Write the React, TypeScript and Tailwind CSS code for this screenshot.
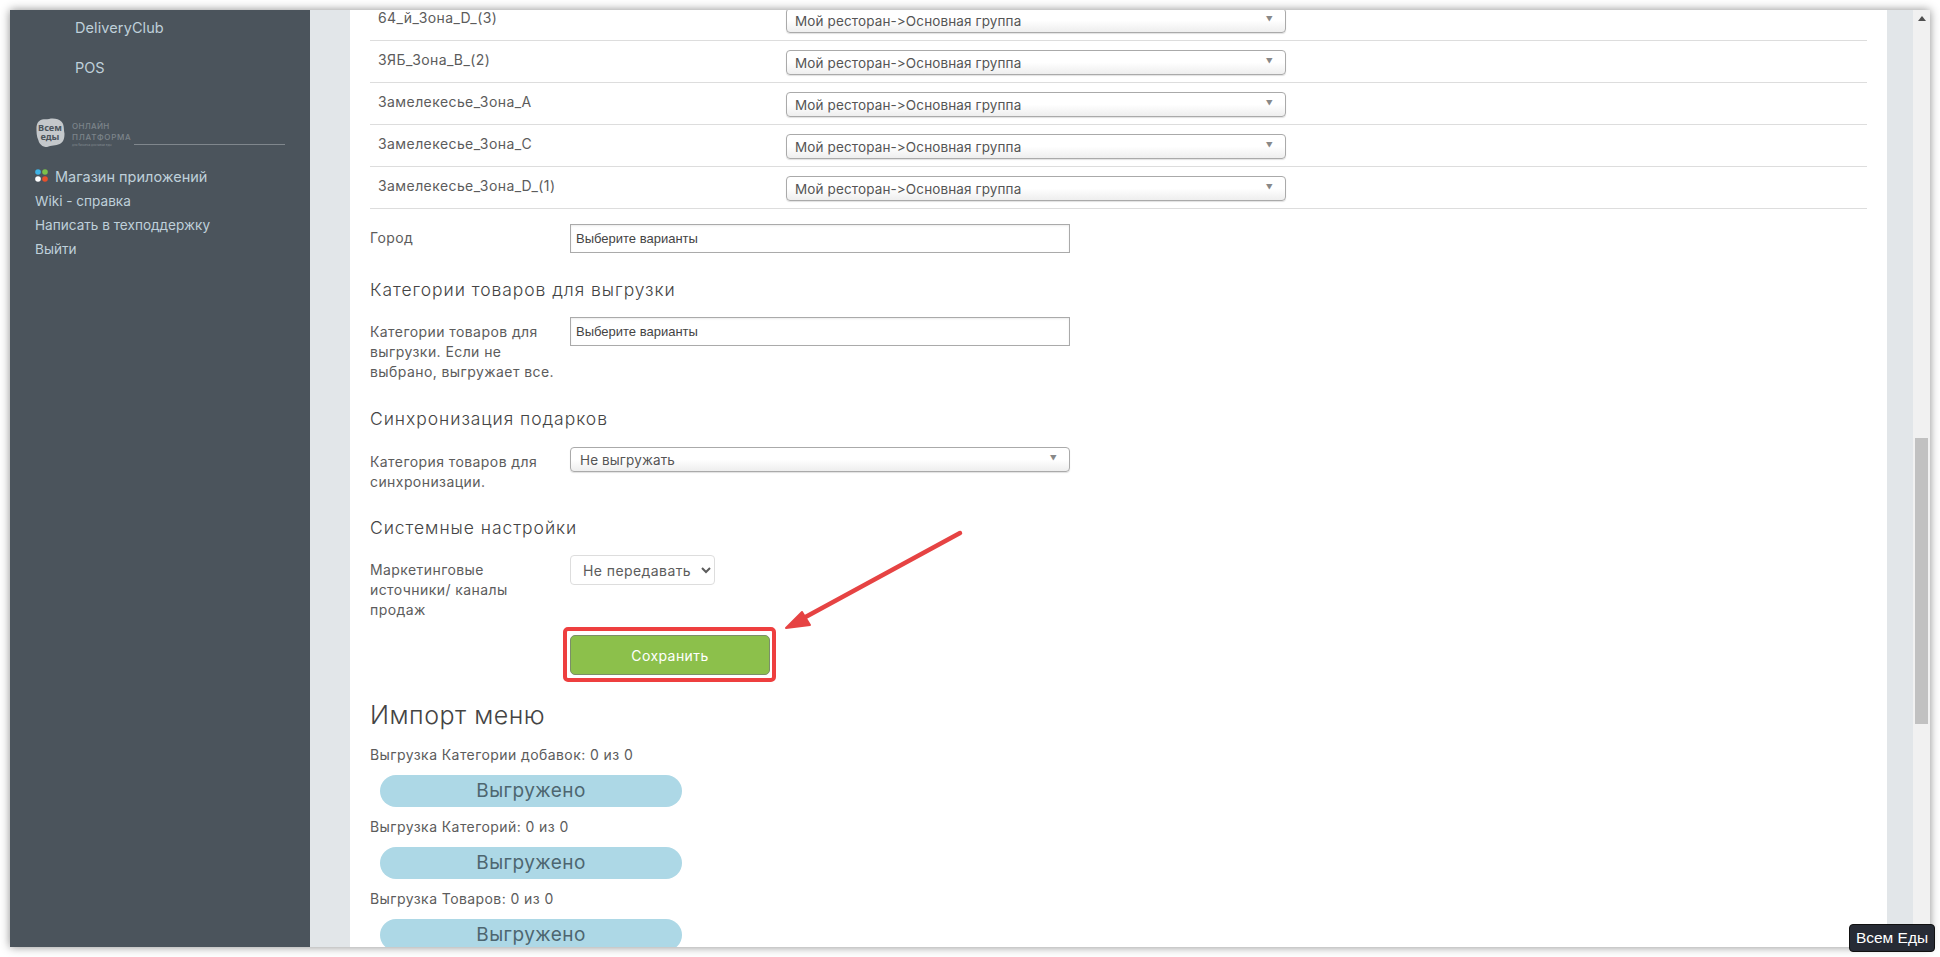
const zones = ["64_й_Зона_D_(3)", "ЗЯБ_Зона_B_(2)", "Замелекесье_Зона_A", "Замелекесье_Зона_C", "Замелекесье_Зона_D_(1)"];
const imports = ["Выгрузка Категории добавок: 0 из 0", "Выгрузка Категорий: 0 из 0", "Выгрузка Товаров: 0 из 0"];
const sideLinks = ["Wiki - справка", "Написать в техподдержку", "Выйти"];

const Logo = () => (
  <div className="flex items-end">
    <svg width="30" height="29" viewBox="0 0 30 30" className="shrink-0">
      <path d="M3 4C7 0 10 2 14 1C19 0 24 1 27 4C30 7 29 12 30 16C30 21 29 25 25 27C21 29 16 28 12 30C7 30 4 27 3 23C1 19 1 14 1 10C1 8 2 5 3 4Z" fill="#c4c8cb" />
      <text x="15" y="13" textAnchor="middle" fontSize="9.5" fontWeight="700" fill="#4b545c" fontFamily="'Noto Sans', sans-serif">Всем</text>
      <text x="15" y="23" textAnchor="middle" fontSize="9.5" fontWeight="700" fill="#4b545c" fontFamily="'Noto Sans', sans-serif">еды</text>
    </svg>
    <div className="ml-[7px] w-[55px] text-[#7d858b] font-['Inter',sans-serif] font-medium">
      <div className="text-[8px] leading-[10px] tracking-[0.3px]">ОНЛАЙН</div>
      <div className="text-[8px] leading-[11px] mt-[1px] tracking-[0.75px] whitespace-nowrap">ПЛАТФОРМА</div>
      <div className="text-[3px] leading-[4px] whitespace-nowrap">для бизнеса доставки еды</div>
    </div>
    <div className="ml-[7px] mb-[2px] w-[151px] border-b border-[#80878d]" />
  </div>
);

const AppDots = () => (
  <svg width="14" height="14" viewBox="0 0 14 14" className="mb-[6px] shrink-0">
    <circle cx="3" cy="3" r="2.8" fill="#3eb3e6" />
    <circle cx="10" cy="3" r="2.8" fill="#7cc04b" />
    <circle cx="3" cy="10" r="2.8" fill="#ffffff" />
    <circle cx="10" cy="10" r="2.8" fill="#e8502a" />
  </svg>
);

const Sidebar = () => (
  <aside className="w-[300px] shrink-0 bg-[#4b545c] text-[#bfd0da] text-[14.5px]">
    <div className="pl-[65px] pt-[8px]">
      <div className="leading-[20px] h-[40px] tracking-[0.1px]">DeliveryClub</div>
      <div className="leading-[20px] h-[40px]">POS</div>
    </div>
    <div className="pl-[25px] pt-[20px]">
      <Logo />
      <div className="mt-[18px] flex items-end gap-[6px] h-[24px] leading-[24px]">
        <AppDots />
        <span>Магазин приложений</span>
      </div>
      {sideLinks.map((link) => (
        <div key={link} className="h-[24px] leading-[24px] text-[13.6px]">
          {link}
        </div>
      ))}
    </div>
  </aside>
);

const GroupSelect = ({ text, className }: { text: string; className: string }) => (
  <div className={`flex items-center justify-between h-[25px] rounded-[4px] border border-[#aaaaaa] bg-gradient-to-b from-white from-50% to-[#eeeeee] text-[13.5px] tracking-[0.12px] text-[#555555] shadow-[0_1px_1px_rgba(0,0,0,0.12)] ${className}`}>
    <span className="mb-[-1px]">{text}</span>
    <span className="mb-[1px] text-[7px] text-[#888888]">▼</span>
  </div>
);

const MultiSelect = () => (
  <div className="w-[500px] h-[29px] border border-[#aaaaaa] pl-[5px] flex items-center font-['Liberation_Sans',sans-serif] text-[13px] tracking-normal text-[#444444] shadow-[inset_0_1px_2px_rgba(0,0,0,0.08)]">
    Выберите варианты
  </div>
);

const FormRow = ({ label, children, className }: { label: React.ReactNode; children: React.ReactNode; className?: string }) => (
  <div className={`flex ${className ?? ""}`}>
    <div className="w-[200px] shrink-0 pt-[5px] leading-[20px]">{label}</div>
    {children}
  </div>
);

const Heading = ({ children, className }: { children: React.ReactNode; className: string }) => (
  <h3 className={`text-[17.5px] leading-[24px] text-[#444444] tracking-[0.95px] font-[350] ${className}`}>{children}</h3>
);

const Content = () => (
  <div className="-mt-[11px] px-[20px] text-[14px] text-[#5c5c5c] font-['Inter',sans-serif] tracking-[0.42px]">
    {zones.map((zone) => (
      <div key={zone} className="flex h-[42px] border-b border-[#dddddd]">
        <div className="w-[416px] shrink-0 pl-[8px] pt-[9px] leading-[20px]">{zone}</div>
        <GroupSelect text="Мой ресторан->Основная группа" className="w-[500px] mt-[9px] pl-[8px] pr-[12px]" />
      </div>
    ))}

    <FormRow label="Город" className="mt-[15px] [&>div:first-child]:pt-[4px]">
      <MultiSelect />
    </FormRow>

    <Heading className="mt-[25px]">Категории товаров для выгрузки</Heading>
    <FormRow label={<>Категории товаров для<br />выгрузки. Если не<br />выбрано, выгружает все.</>} className="mt-[15px]">
      <MultiSelect />
    </FormRow>

    <Heading className="mt-[25px]">Синхронизация подарков</Heading>
    <FormRow label={<>Категория товаров для<br />синхронизации.</>} className="mt-[16px]">
      <GroupSelect text="Не выгружать" className="w-[500px] pl-[9px] pr-[12px]" />
    </FormRow>

    <Heading className="mt-[24px]">Системные настройки</Heading>
    <FormRow label={<>Маркетинговые<br />источники/ каналы<br />продаж</>} className="mt-[15px]">
      <select defaultValue="none" className="w-[145px] h-[30px] pl-[8px] bg-white border border-[#dddddd] rounded-[4px] text-[14px] text-[#5c5c5c]">
        <option value="none">Не передавать</option>
      </select>
    </FormRow>

    <div className="mt-[7px] ml-[193px] w-[213px] h-[55px] border-[4px] border-[#ee3f3f] rounded-[5px] pt-[4px] pl-[3px]">
      <button className="w-[200px] h-[40px] rounded-[5px] border border-[#7b8f68] bg-[#8cc04b] text-white text-[14px]">Сохранить</button>
    </div>

    <h2 className="mt-[17px] text-[25px] leading-[32px] text-[#444444] tracking-[0.5px] font-[350]">Импорт меню</h2>
    <div className="mt-[14px] flex flex-col gap-[10px] leading-[20px]">
      {imports.map((item) => (
        <div key={item} className="flex flex-col gap-[10px]">
          <div>{item}</div>
          <div className="ml-[10px] w-[302px] h-[32px] rounded-full bg-[#add8e6] text-center text-[19px] leading-[32px] text-[#4d6670]">Выгружено</div>
        </div>
      ))}
    </div>
  </div>
);

const Scrollbar = () => (
  <div className="w-[17px] shrink-0 bg-[#f1f1f1] flex flex-col items-center">
    <span className="mt-[6px] h-0 w-0 border-x-[4px] border-b-[5px] border-x-transparent border-b-[#505050]" />
    <div className="mt-[417px] w-[13px] h-[286px] bg-[#c1c1c1]" />
  </div>
);

export default function App() {
  return (
    <div className="relative w-[1940px] h-[957px] overflow-hidden bg-white p-[10px] font-['Inter',sans-serif]">
      <div className="flex h-[937px] overflow-hidden shadow-[0_0_9px_rgba(0,0,0,0.45)]">
        <Sidebar />
        <main className="flex-1 flex bg-[#e2e6e9] pl-[40px] pr-[26px] overflow-hidden">
          <div className="flex-1 bg-white overflow-hidden">
            <Content />
          </div>
        </main>
        <Scrollbar />
      </div>

      {/* arrow drawn on the screenshot */}
      <svg className="absolute left-[770px] top-[520px]" width="200" height="125" viewBox="0 0 200 125">
        <path d="M190 13 L30 100" stroke="#e64343" strokeWidth="4.5" strokeLinecap="round" />
        <path d="M16 108 L32 92 L40 105 Z" fill="#e64343" stroke="#e64343" strokeWidth="2" strokeLinejoin="round" />
      </svg>

      <div className="absolute left-[1849px] top-[924px] w-[86px] h-[28px] rounded-[4px] border border-[#111111] bg-[#272b35] text-center text-[15.5px] leading-[26px] text-white font-['Liberation_Sans',sans-serif]">
        Всем Еды
      </div>
    </div>
  );
}
